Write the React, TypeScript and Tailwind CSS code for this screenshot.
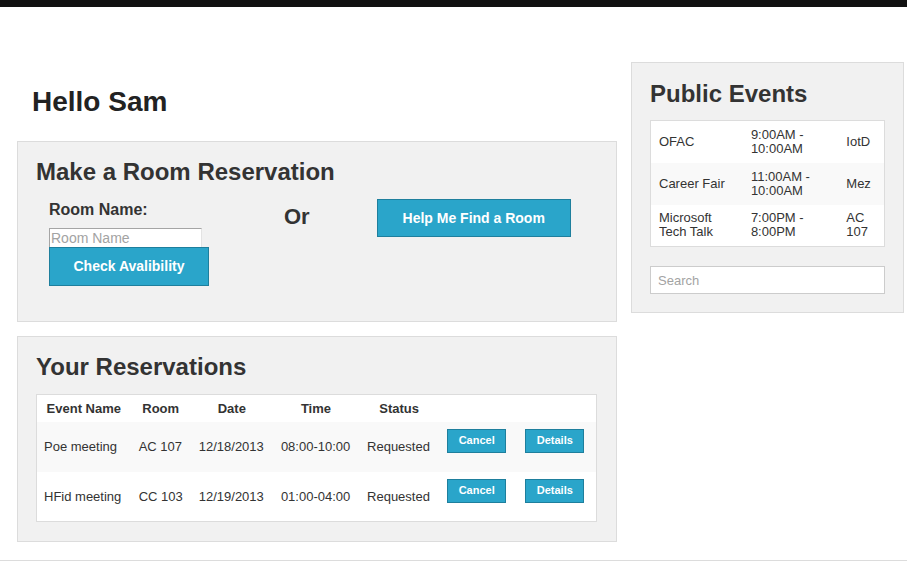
import React from 'react';

type Reservation = {
  name: string;
  room: string;
  date: string;
  time: string;
  status: string;
};

type PublicEvent = {
  name: string[];
  time: string[];
  place: string[];
};

const reservations: Reservation[] = [
  { name: 'Poe meeting', room: 'AC 107', date: '12/18/2013', time: '08:00-10:00', status: 'Requested' },
  { name: 'HFid meeting', room: 'CC 103', date: '12/19/2013', time: '01:00-04:00', status: 'Requested' },
];

const publicEvents: PublicEvent[] = [
  { name: ['OFAC'], time: ['9:00AM -', '10:00AM'], place: ['IotD'] },
  { name: ['Career Fair'], time: ['11:00AM -', '10:00AM'], place: ['Mez'] },
  { name: ['Microsoft', 'Tech Talk'], time: ['7:00PM -', '8:00PM'], place: ['AC', '107'] },
];

const SmallButton: React.FC<{ label: string }> = ({ label }) => (
  <button className="w-[59px] h-[24px] bg-[#2aa5ca] border border-[#1e7f9d] text-white text-[11px] font-bold leading-none">
    {label}
  </button>
);

const Lines: React.FC<{ lines: string[] }> = ({ lines }) => (
  <>
    {lines.map((l, i) => (
      <div key={i}>{l}</div>
    ))}
  </>
);

const App: React.FC = () => {
  return (
    <div className="min-h-screen bg-white text-[#333] font-[Liberation_Sans,Arial,sans-serif]">
      {/* Top bar */}
      <div className="h-[7px] bg-[#111]"></div>

      <div className="flex gap-[14px] pl-[17px]">
        {/* Left column */}
        <div className="w-[600px]">
          <h1 className="mt-[80px] pl-[15px] text-[28px] font-bold leading-[29px] text-[#222]">Hello Sam</h1>

          {/* Room reservation panel */}
          <div className="mt-[25px] bg-[#f1f1f1] border border-[#dcdcdc] pt-[18px] pl-[18px] pb-[35px]">
            <h2 className="text-[24px] font-bold leading-none">Make a Room Reservation</h2>
            <div className="flex items-start">
              <div className="ml-[13px] w-[160px] flex flex-col">
                <label className="mt-[18px] text-[16px] font-bold leading-none">Room Name:</label>
                <input
                  placeholder="Room Name"
                  className="mt-[10px] w-[153px] h-[19px] bg-white border border-[#a5a5a5] border-r-[#e3e3e3] border-b-0 px-[1px] text-[14px] leading-none placeholder:text-[#a3a3a3] outline-none"
                />
                <button className="w-[160px] h-[39px] bg-[#2aa5ca] border border-[#1e7f9d] text-white text-[14px] font-bold">
                  Check Avalibility
                </button>
              </div>
              <div className="ml-[75px] mt-[22px] text-[22px] font-bold leading-none">Or</div>
              <button className="ml-[67px] mt-[15px] w-[194px] h-[38px] bg-[#2aa5ca] border border-[#1e7f9d] text-white text-[14px] font-bold">
                Help Me Find a Room
              </button>
            </div>
          </div>

          {/* Reservations panel */}
          <div className="mt-[14px] bg-[#f1f1f1] border border-[#dcdcdc] pt-[18px] pl-[18px] pr-[19px] pb-[19px]">
            <h2 className="text-[24px] font-bold leading-none">Your Reservations</h2>
            <table className="mt-[15px] w-[561px] table-fixed border border-[#dcdcdc] bg-white text-[13px]">
              <colgroup>
                <col className="w-[94px]" />
                <col className="w-[60px]" />
                <col className="w-[82px]" />
                <col className="w-[86px]" />
                <col className="w-[80px]" />
                <col className="w-[78px]" />
                <col className="w-[79px]" />
              </colgroup>
              <thead>
                <tr className="h-[27px] font-bold">
                  <th className="px-[8px] text-center font-bold">Event Name</th>
                  <th className="px-[8px] text-center font-bold">Room</th>
                  <th className="px-[8px] text-center font-bold">Date</th>
                  <th className="px-[8px] text-center font-bold">Time</th>
                  <th className="px-[8px] text-center font-bold">Status</th>
                  <th></th>
                  <th></th>
                </tr>
              </thead>
              <tbody>
                {reservations.map((r, i) => (
                  <tr key={r.name} className={i % 2 === 0 ? 'h-[50px] bg-[#f9f9f9]' : 'h-[50px] bg-white'}>
                    <td className="pl-[7px] whitespace-nowrap">{r.name}</td>
                    <td className="pl-[8px] whitespace-nowrap">{r.room}</td>
                    <td className="pl-[8px] whitespace-nowrap">{r.date}</td>
                    <td className="pl-[8px] whitespace-nowrap">{r.time}</td>
                    <td className="pl-[8px] whitespace-nowrap">{r.status}</td>
                    <td className="pl-[8px] pt-[7px] align-top">
                      <SmallButton label="Cancel" />
                    </td>
                    <td className="pl-[8px] pt-[7px] align-top">
                      <SmallButton label="Details" />
                    </td>
                  </tr>
                ))}
              </tbody>
            </table>
          </div>
        </div>

        {/* Right column */}
        <div className="w-[273px] mt-[55px] self-start bg-[#f1f1f1] border border-[#dcdcdc] pt-[19px] pl-[18px] pb-[18px]">
          <h2 className="text-[24px] font-bold leading-none">Public Events</h2>
          <table className="mt-[14px] w-[235px] table-fixed border border-[#dcdcdc] bg-white text-[13px] leading-[14px]">
            <colgroup>
              <col className="w-[92px]" />
              <col className="w-[95px]" />
              <col className="w-[46px]" />
            </colgroup>
            <tbody>
              {publicEvents.map((e, i) => (
                <tr key={i} className={i % 2 === 1 ? 'h-[42px] bg-[#f9f9f9]' : 'h-[42px] bg-white'}>
                  <td className="pl-[8px]">
                    <Lines lines={e.name} />
                  </td>
                  <td className="pl-[8px]">
                    <Lines lines={e.time} />
                  </td>
                  <td className="pl-[8px]">
                    <Lines lines={e.place} />
                  </td>
                </tr>
              ))}
            </tbody>
          </table>
          <input
            placeholder="Search"
            className="mt-[19px] block w-[235px] h-[28px] bg-white border border-[#cccccc] px-[7px] text-[13px] placeholder:text-[#a3a3a3] outline-none"
          />
        </div>
      </div>

      {/* Footer line */}
      <div className="mt-[18px] border-t border-[#dcdcdc]"></div>
    </div>
  );
};

export default App;
